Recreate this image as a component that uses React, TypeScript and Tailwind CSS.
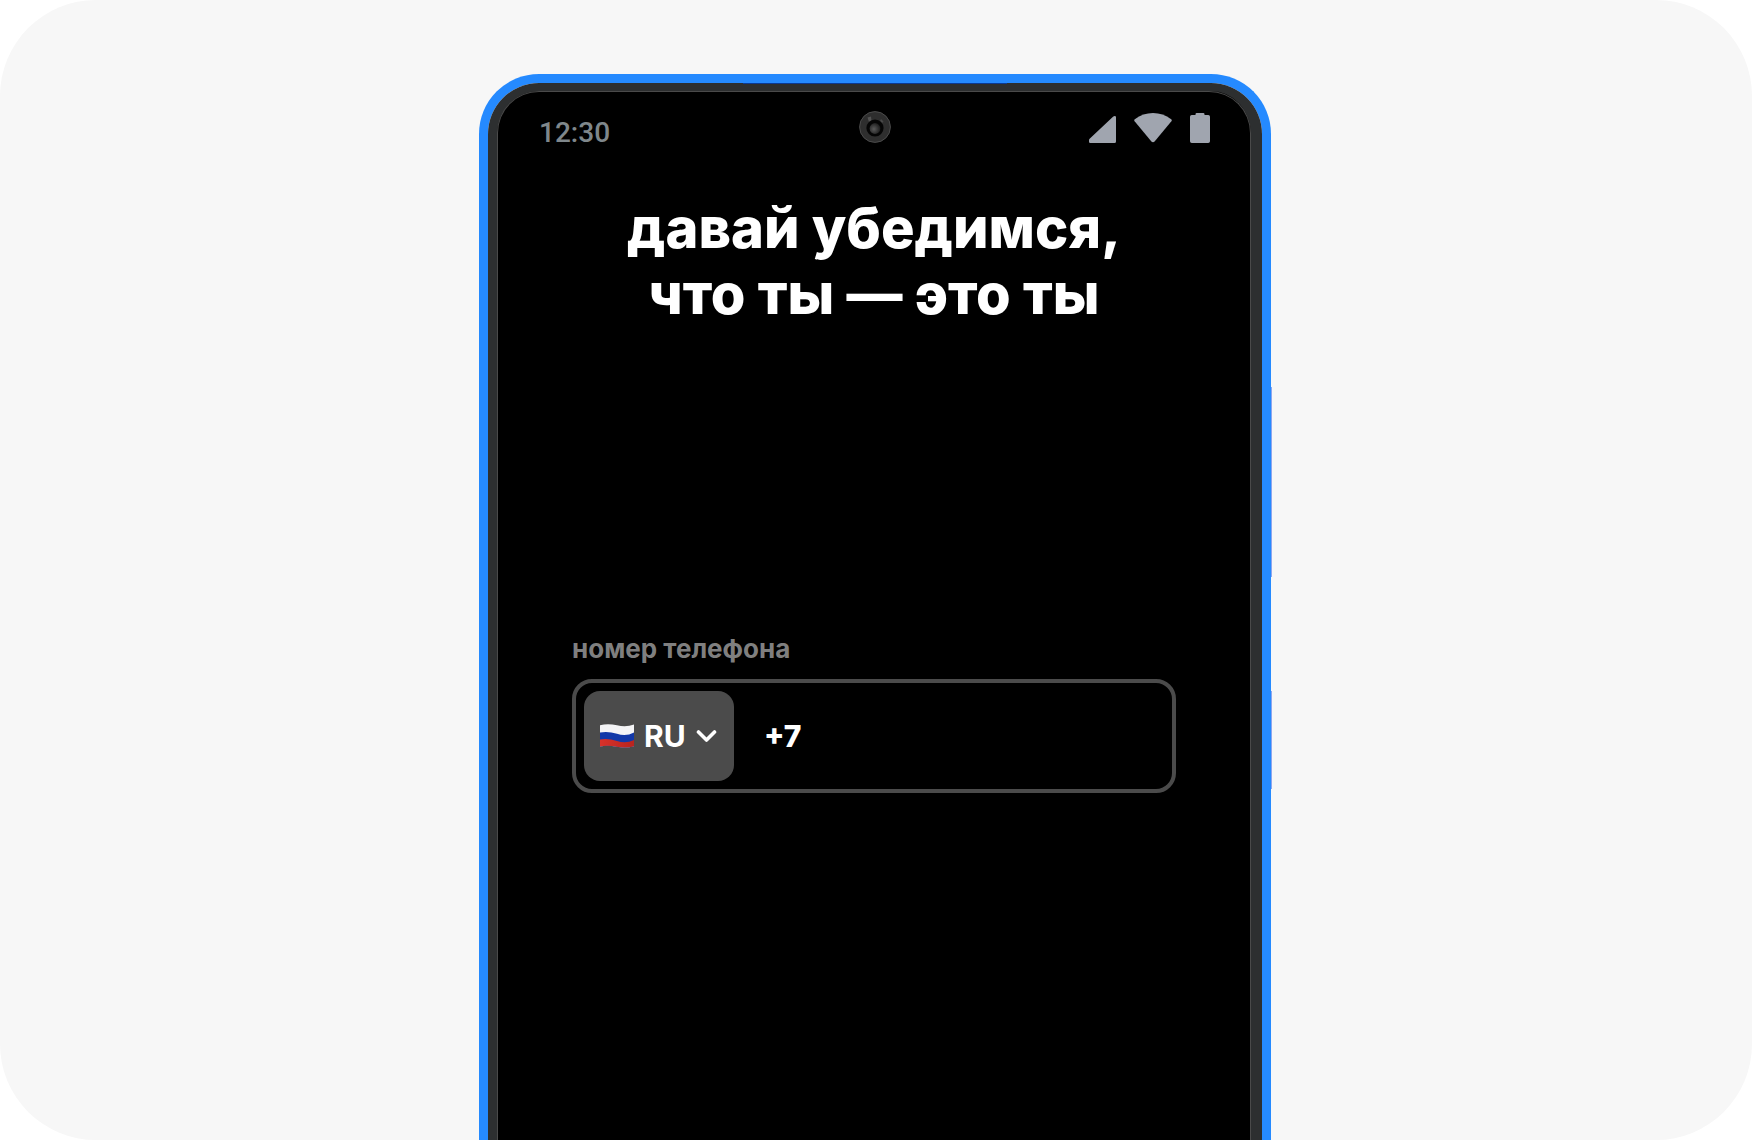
function Camera() {
  return (
    <svg viewBox="0 0 32 32" className="size-8" aria-hidden="true">
      <defs>
        <radialGradient id="lens" cx="40%" cy="55%" r="60%">
          <stop offset="0" stopColor="#5a5a5a" />
          <stop offset="1" stopColor="#1c1c1c" />
        </radialGradient>
      </defs>
      <circle cx="16" cy="16" r="15.4" fill="#2e2e2e" stroke="#4b4b4b" strokeWidth="1" />
      <path d="M8.5 6.500l3.500-1 .5 4-2.500 1.500z" fill="#5c5c5c" opacity=".8" />
      <path d="M22 8l2.500 2.500-1.500 1.500-2-2z" fill="#484848" />
      <circle cx="16" cy="17" r="8.600" fill="#050505" />
      <circle cx="16" cy="17.500" r="5.400" fill="url(#lens)" />
    </svg>
  );
}

function SignalIcon() {
  return (
    <svg viewBox="0 0 27 27" className="h-[27px] w-[27px]" aria-hidden="true">
      <path d="M0 24.200v1.600Q0 27 1.200 27H25.500Q27 27 27 25.500V1.200Q27 0 25.800 0 24.800 0 24 .8L.9 22.600Q0 23.400 0 24.200Z" fill="#a0a5af" />
    </svg>
  );
}

function WifiIcon() {
  return (
    <svg viewBox="0 0 38 30" className="h-[30px] w-[38px]" aria-hidden="true">
      <path d="M.6 8.300Q-.3 7.200.8 6.300 9 0 19 0T37.200 6.300Q38.300 7.200 37.400 8.300L20.600 28.400Q19 30 17.400 28.400Z" fill="#a0a5af" />
    </svg>
  );
}

function BatteryIcon() {
  return (
    <svg viewBox="0 0 20 30" className="h-[30px] w-5" aria-hidden="true">
      <path d="M5.500 2V1.200Q5.500 0 6.700 0h6.600q1.200 0 1.200 1.200V2H18.200Q20 2 20 3.800V28.200Q20 30 18.200 30H1.800Q0 30 0 28.200V3.800Q0 2 1.800 2Z" fill="#a0a5af" />
    </svg>
  );
}

function RussianFlag() {
  return (
    <svg viewBox="0 0 34 24" className="h-6 w-[34px]" aria-hidden="true">
      <defs>
        <clipPath id="flag-shape">
          <path d="M0 1.200Q8-.8 17 1.300T34 .6V22.300Q26 24.600 17 22.800T0 22.400Z" />
        </clipPath>
        <linearGradient id="flag-red" x1="0" x2="1">
          <stop offset="0" stopColor="#d8322a" />
          <stop offset="1" stopColor="#b8241e" />
        </linearGradient>
      </defs>
      <g clipPath="url(#flag-shape)">
        <rect width="34" height="24" fill="#f4f4f6" />
        <path d="M0 8.500Q8 6.800 17 9.800T34 8.500V24H0Z" fill="#1238a8" />
        <path d="M0 15.500Q8 14 17 17T34 16V24H0Z" fill="url(#flag-red)" />
      </g>
    </svg>
  );
}

function StatusBar() {
  return (
    <header className="grid grid-cols-[1fr_auto_1fr] items-start pl-[41px] pr-10 pt-[19px]">
      <time className="pt-1.5 font-['Roboto',sans-serif] text-[28px] font-medium leading-8 text-[#7f878b]">12:30</time>
      <Camera />
      <div className="flex items-end justify-end gap-[18px] pt-0.5">
        <SignalIcon />
        <WifiIcon />
        <BatteryIcon />
      </div>
    </header>
  );
}

function PhoneField() {
  return (
    <form className="mx-[74px] mt-[306px]">
      <label htmlFor="phone" className="block text-[26px] font-bold leading-8 text-[#7f7f7f]">
        номер телефона
      </label>
      <div className="mt-3.5 flex rounded-[20px] border-4 border-[#4b4b4b] p-2">
        <div className="relative shrink-0">
          <select
            aria-label="Код страны"
            defaultValue="RU"
            className="h-[90px] w-[150px] appearance-none rounded-2xl bg-[#4b4b4b] pl-[60px] text-[30px] font-bold text-white outline-none"
          >
            <option value="RU">RU</option>
          </select>
          <span className="pointer-events-none absolute inset-y-0 left-4 flex items-center">
            <RussianFlag />
          </span>
          <span className="pointer-events-none absolute inset-y-0 right-4 flex items-center">
            <svg viewBox="0 0 22 14" className="h-3.5 w-[22px]" fill="none" aria-hidden="true">
              <path d="M2.500 3l8 8 8-8" stroke="#fff" strokeWidth="3.600" strokeLinecap="round" strokeLinejoin="round" />
            </svg>
          </span>
        </div>
        <input
          id="phone"
          type="tel"
          defaultValue="+7"
          className="min-w-0 flex-1 bg-transparent pl-[30px] text-[30px] font-extrabold text-white outline-none"
        />
      </div>
    </form>
  );
}

export default function App() {
  return (
    <div className="min-h-screen bg-white font-['Inter',sans-serif]">
      <main className="flex min-h-screen justify-center overflow-hidden rounded-[96px] bg-[#f7f7f7] pr-0.5 pt-[74px]">
        <div className="relative flex w-[792px] max-w-full rounded-t-[60px] border-x-[9px] border-t-[9px] border-[#258aff]">
          <span className="absolute -right-[10px] top-[304px] h-[190px] w-px bg-[#8fa6ee]" />
          <span className="absolute -right-[10px] top-[608px] h-[98px] w-px bg-[#8fa6ee]" />
          <span className="absolute inset-x-0 top-0 mx-auto h-px w-[264px] bg-[#0b3a94]" />
          <div className="flex min-w-0 flex-1 rounded-t-[51px] border-l-[9px] border-r-[11px] border-t-8 border-[#2d2f30] bg-black">
            <div className="min-w-0 flex-1 rounded-t-[42px] border-x border-t border-[#4a4a4a] bg-black">
              <StatusBar />
              <h1 className="mt-[46px] text-center text-[56px] font-extrabold leading-[66px] text-white">
                давай убедимся,
                <br />
                что ты — это ты
              </h1>
              <PhoneField />
            </div>
          </div>
        </div>
      </main>
    </div>
  );
}
